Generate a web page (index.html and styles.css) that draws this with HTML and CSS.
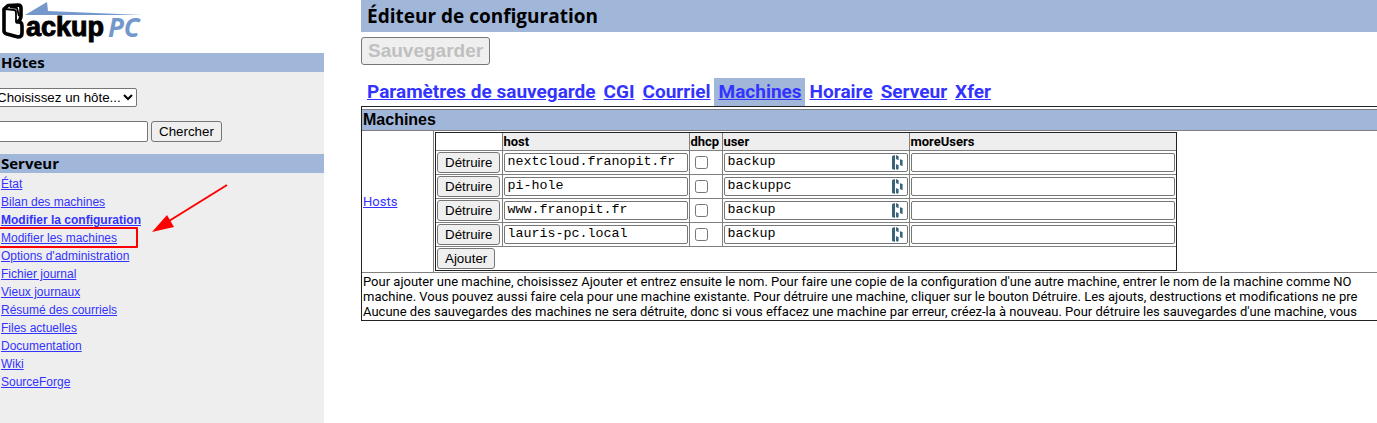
FILE: index.html
```html
<!DOCTYPE html>
<html lang="fr">
    <head>
        <meta charset="utf-8">
        <meta name="viewport" content="width=device-width, initial-scale=1">
        <title>BackupPC</title>
        <link rel="stylesheet" href="styles.css">
    </head>
    <body>
        <svg class="symbols" width="0" height="0" aria-hidden="true">
            <symbol id="fillIcon" viewBox="0 0 11 15">
                <path d="M0 1L3 0V15L0 14ZM4 0L6 1V5L4 4ZM4 9L6 10V15L4 14ZM8 4L10 5V11L8 10Z" fill="#3c6478"/>
                <path d="M6 1H7V5H6ZM6 10H7V14H6ZM10 5H11V11H10Z" fill="#8aa2ae"/>
            </symbol>
        </svg>
        <div class="navLeft">
            <a class="logo" href="#">
                <svg width="144" height="46" viewBox="0 0 144 46" role="img" aria-label="BackupPC">
                    <path d="M25 15L47 2L48 11L142 15Z" fill="#7498cb"/>
                    <path d="M4 9L8 5.5L18 5Q21 5 21 8V16Q21 20 17 22Q22 21 22 26V33Q22 37 18 37L7 34Q4 33 4 31Z" fill="#fff" stroke="#000" stroke-width="3.6" stroke-linejoin="round"/>
                    <path d="M5 9L14 10Q16 10 16 13V21L19 22M10 7L17 8L19 16" fill="none" stroke="#000" stroke-width="1.8"/>
                    <text class="logoBackup" x="26" y="36">ackup</text>
                    <text class="logoPc" x="108" y="37">PC</text>
                </svg>
            </a>
            <div class="navBody">
                <h2 class="navTitle">Hôtes</h2>
                <form class="hostForm">
                    <select class="hostSelect" aria-label="Hôte">
                        <option>Choisissez un hôte...</option>
                    </select>
                    <div class="searchRow">
                        <input class="searchBox" type="text" name="host" aria-label="Chercher un hôte">
                        <button type="submit">Chercher</button>
                    </div>
                </form>
                <h2 class="navTitle">Serveur</h2>
                <nav class="navLinks">
                    <a href="#">État</a>
                    <a href="#">Bilan des machines</a>
                    <a href="#" class="navCurrent">Modifier la configuration</a>
                    <a href="#" class="navMarked">Modifier les machines
                        <svg class="arrow" width="77" height="50" viewBox="0 0 77 50" aria-hidden="true">
                            <path d="M76 1L18 37" stroke="#f00" stroke-width="2"/>
                            <path d="M1 48L16 31L23 43Z" fill="#f00"/>
                        </svg>
                    </a>
                    <a href="#">Options d'administration</a>
                    <a href="#">Fichier journal</a>
                    <a href="#">Vieux journaux</a>
                    <a href="#">Résumé des courriels</a>
                    <a href="#">Files actuelles</a>
                    <a href="#">Documentation</a>
                    <a href="#">Wiki</a>
                    <a href="#">SourceForge</a>
                </nav>
            </div>
        </div>
        <main class="content">
            <h1>Éditeur de configuration</h1>
            <button type="button" class="save" disabled>Sauvegarder</button>
            <nav class="tabs">
                <a href="#">Paramètres de sauvegarde</a>
                <a href="#">CGI</a>
                <a href="#">Courriel</a>
                <a href="#" class="tabActive">Machines</a>
                <a href="#">Horaire</a>
                <a href="#">Serveur</a>
                <a href="#">Xfer</a>
            </nav>
            <div class="editor">
                <h3>Machines</h3>
                <div class="editorRow">
                    <div class="editorName"><a href="#">Hosts</a></div>
                    <table class="hosts">
                        <thead>
                            <tr>
                                <td></td>
                                <th>host</th>
                                <th>dhcp</th>
                                <th>user</th>
                                <th>moreUsers</th>
                            </tr>
                        </thead>
                        <tbody>
                            <tr>
                                <td><button type="button">Détruire</button></td>
                                <td><input type="text" aria-label="host" value="nextcloud.franopit.fr"></td>
                                <td><input type="checkbox" aria-label="dhcp"></td>
                                <td class="user"><input type="text" aria-label="user" value="backup"><svg class="fill"><use href="#fillIcon"/></svg></td>
                                <td><input type="text" class="wide" aria-label="moreUsers"></td>
                            </tr>
                            <tr>
                                <td><button type="button">Détruire</button></td>
                                <td><input type="text" aria-label="host" value="pi-hole"></td>
                                <td><input type="checkbox" aria-label="dhcp"></td>
                                <td class="user"><input type="text" aria-label="user" value="backuppc"><svg class="fill"><use href="#fillIcon"/></svg></td>
                                <td><input type="text" class="wide" aria-label="moreUsers"></td>
                            </tr>
                            <tr>
                                <td><button type="button">Détruire</button></td>
                                <td><input type="text" aria-label="host" value="www.franopit.fr"></td>
                                <td><input type="checkbox" aria-label="dhcp"></td>
                                <td class="user"><input type="text" aria-label="user" value="backup"><svg class="fill"><use href="#fillIcon"/></svg></td>
                                <td><input type="text" class="wide" aria-label="moreUsers"></td>
                            </tr>
                            <tr>
                                <td><button type="button">Détruire</button></td>
                                <td><input type="text" aria-label="host" value="lauris-pc.local"></td>
                                <td><input type="checkbox" aria-label="dhcp"></td>
                                <td class="user"><input type="text" aria-label="user" value="backup"><svg class="fill"><use href="#fillIcon"/></svg></td>
                                <td><input type="text" class="wide" aria-label="moreUsers"></td>
                            </tr>
                            <tr>
                                <td colspan="5"><button type="button">Ajouter</button></td>
                            </tr>
                        </tbody>
                    </table>
                </div>
                <p class="help">
                    Pour ajouter une machine, choisissez Ajouter et entrez ensuite le nom. Pour faire une copie de la configuration d'une autre machine, entrer le nom de la machine comme NO<br>
                    machine. Vous pouvez aussi faire cela pour une machine existante. Pour détruire une machine, cliquer sur le bouton Détruire. Les ajouts, destructions et modifications ne pre<br>
                    Aucune des sauvegardes des machines ne sera détruite, donc si vous effacez une machine par erreur, créez-la à nouveau. Pour détruire les sauvegardes d'une machine, vous
                </p>
            </div>
        </main>
    </body>
</html>
```

FILE: styles.css
```css
*, *::after {
    box-sizing: border-box;
}
body {
    margin: 0;
    min-height: 100vh;
    display: flex;
    overflow: hidden;
    font-family: Roboto, sans-serif;
    font-size: 13px;
    line-height: 15px;
    color: #000;
    background: #fff;
}
a {
    color: #33f;
}
h1, h2, h3, p {
    margin: 0;
}
.symbols {
    position: absolute;
}
button, select {
    font-family: "Liberation Sans", Arial, sans-serif;
    color: #000;
    border: 1px solid #767676;
    border-radius: 3px;
}
button {
    height: 21px;
    padding: 0 7px;
    background: #efefef;
}
input[type=text] {
    height: 19px;
    padding: 1px 2px;
    border: 1px solid #767676;
    border-radius: 2px;
    font-family: "Liberation Mono", "Courier New", monospace;
}

/* left column */
.navLeft {
    width: 324px;
    flex-shrink: 0;
    display: flex;
    flex-direction: column;
    overflow: hidden;
}
.logo {
    height: 53px;
}
.logo svg {
    display: block;
}
.logoBackup {
    font: bold 27px "Liberation Sans", Arial, sans-serif;
    stroke: #000;
    stroke-width: 1px;
}
.logoPc {
    font: italic bold 26px "Open Sans", sans-serif;
    fill: #7498cb;
}
.navBody {
    flex: 1;
    background: #eee;
}
.navTitle {
    height: 19px;
    padding-left: 1px;
    background: #a0b7da;
    font: bold 15px/19px "Open Sans", sans-serif;
}
.hostForm {
    margin-left: -8px;
    padding: 16px 0 12px;
}
.hostSelect {
    display: block;
    width: 145px;
    height: 19px;
    padding: 0;
    background: #fff;
    border-radius: 2px;
}
.searchRow {
    display: flex;
    gap: 3px;
    padding-top: 14px;
}
.searchRow .searchBox {
    width: 156px;
    height: 21px;
}
.navLinks {
    display: flex;
    flex-direction: column;
    align-items: flex-start;
    padding: 2px 0 0 1px;
    font: 12px/18px "Liberation Sans", Arial, sans-serif;
}
.navCurrent {
    font-weight: bold;
}
.navMarked {
    position: relative;
}
/* red frame round the link, over the neighbouring lines */
.navMarked::after {
    content: "";
    position: absolute;
    top: -2px;
    left: -4px;
    right: -21px;
    height: 21px;
    border: 2px solid #f00;
    border-radius: 1px;
}
.arrow {
    position: absolute;
    left: 150px;
    top: -45px;
}

/* right column */
.content {
    flex: 1;
    min-width: 0;
    margin-left: 37px;
}
h1 {
    height: 32px;
    padding-left: 6px;
    background: #a0b7da;
    font: bold 19px/32px "Open Sans", sans-serif;
}
.save {
    display: block;
    height: 28px;
    margin: 5px 0 13px;
    padding: 0 6px;
    font-size: 19px;
    font-weight: bold;
    color: #c0c0c0;
}
.tabs {
    display: flex;
    padding-left: 1px;
    font-size: 19px;
    font-weight: bold;
    line-height: 28px;
    white-space: nowrap;
}
.tabs a {
    padding: 0 3px 0 5px;
}
.tabs .tabActive {
    background: #a0b7da;
}
.editor {
    border: 1px solid #222;
    border-right: 0;
    padding-top: 2px;
}
h3 {
    padding-left: 1px;
    border: solid #808080;
    border-width: 1px 0;
    background: #a0b7da;
    font: bold 16px/20px "Liberation Sans", Arial, sans-serif;
}
.editorRow {
    display: flex;
    border-bottom: 1px solid #808080;
}
.editorName {
    width: 72px;
    display: flex;
    align-items: center;
    padding-left: 1px;
    border-right: 1px solid #808080;
}
.hosts {
    margin: 1px;
    border: 1px solid #222;
    border-collapse: separate;
    border-spacing: 0;
}
.hosts th, .hosts td {
    height: 24px;
    padding: 0 1px;
    border: solid #808080;
    border-width: 0 1px 1px 0;
    text-align: left;
}
.hosts thead th, .hosts thead td {
    height: 18px;
    padding: 0;
}
.hosts th {
    background: #eee;
}
.hosts th:last-child, .hosts td:last-child {
    border-right: 0;
}
.hosts tbody tr:last-child td {
    height: 23px;
    border-bottom: 0;
}
.hosts button, .hosts input {
    display: block;
}
.hosts tbody td:first-child {
    padding-right: 2px;
}
.hosts input[type=text] {
    width: 184px;
    padding-bottom: 3px;
}
.hosts input.wide[type=text] {
    width: 264px;
}
.hosts input[type=checkbox] {
    width: 13px;
    height: 13px;
    margin: 0 13px 0 4px;
}
.user {
    position: relative;
}
.fill {
    position: absolute;
    top: 4px;
    right: 6px;
    width: 11px;
    height: 15px;
}
.help {
    padding: 1px;
    white-space: nowrap;
    overflow: hidden;
}
```
